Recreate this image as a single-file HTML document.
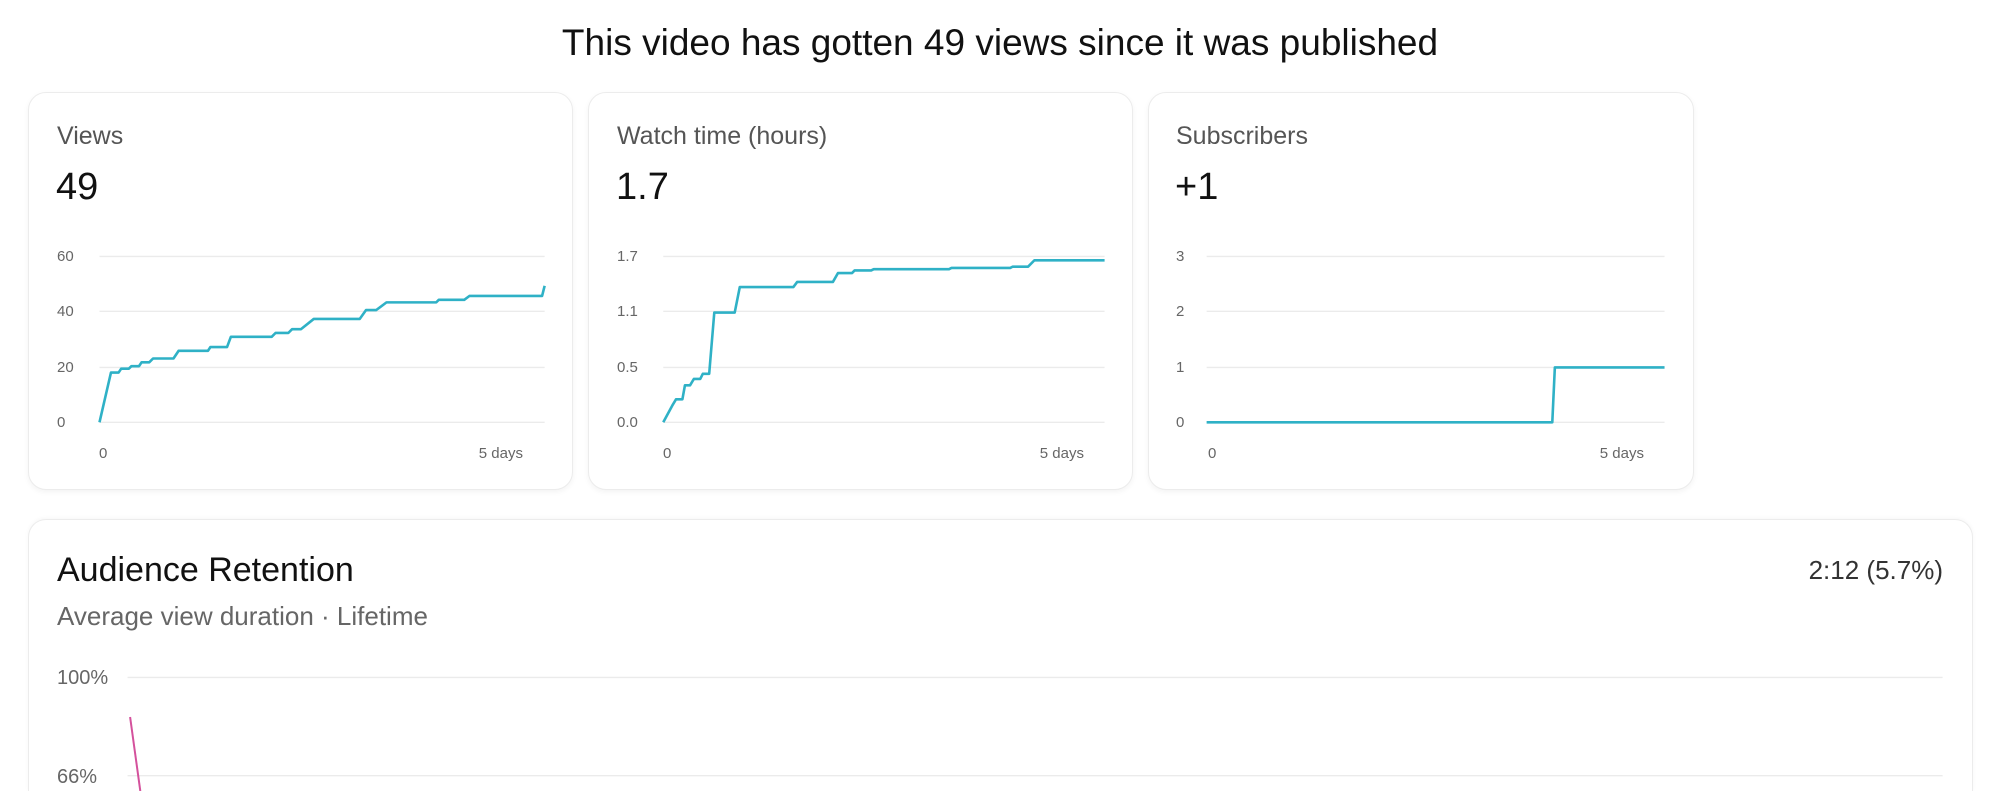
<!DOCTYPE html>
<html style="overflow:hidden;height:791px"><head><meta charset="utf-8"><style>
*{margin:0;padding:0;box-sizing:border-box}
body{width:2000px;height:791px;background:#fff;position:relative;overflow:hidden;font-family:"Liberation Sans",sans-serif;color:#111}
#w{position:absolute;left:0;top:0;width:2000px;height:791px;overflow:hidden}
.t{position:absolute;white-space:nowrap;line-height:1}
.card{position:absolute;background:#fff;border:1px solid #ececec;border-radius:18px;box-shadow:0 2px 6px rgba(0,0,0,0.05)}
.lbl{font-size:25px;color:#555}
.val{font-size:38px;color:#111}
.ax{font-size:15px;color:#666}
svg{position:absolute;left:0;top:0}
</style></head><body><div id="w">
<div class="t" style="left:0;width:2000px;text-align:center;top:24px;font-size:37px;color:#111">This video has gotten 49 views since it was published</div>

<div class="card" style="left:28px;top:92px;width:545px;height:398px"></div>
<div class="card" style="left:588px;top:92px;width:545px;height:398px"></div>
<div class="card" style="left:1148px;top:92px;width:546px;height:398px"></div>
<div class="card" style="left:28px;top:519px;width:1945px;height:272px;border-bottom:none;border-radius:18px 18px 0 0;box-shadow:0 -1px 4px rgba(0,0,0,0.04)"></div>

<div class="t lbl" style="left:57px;top:124px">Views</div>
<div class="t val" style="left:56px;top:168px">49</div>
<div class="t lbl" style="left:617px;top:124px">Watch time (hours)</div>
<div class="t val" style="left:616px;top:168px">1.7</div>
<div class="t lbl" style="left:1176px;top:124px">Subscribers</div>
<div class="t val" style="left:1175px;top:168px">+1</div>

<div class="t ax" style="left:57px;top:249px">60</div>
<div class="t ax" style="left:57px;top:304px">40</div>
<div class="t ax" style="left:57px;top:360px">20</div>
<div class="t ax" style="left:57px;top:415px">0</div>
<div class="t ax" style="left:617px;top:249px">1.7</div>
<div class="t ax" style="left:617px;top:304px">1.1</div>
<div class="t ax" style="left:617px;top:360px">0.5</div>
<div class="t ax" style="left:617px;top:415px">0.0</div>
<div class="t ax" style="left:1176px;top:249px">3</div>
<div class="t ax" style="left:1176px;top:304px">2</div>
<div class="t ax" style="left:1176px;top:360px">1</div>
<div class="t ax" style="left:1176px;top:415px">0</div>

<div class="t ax" style="left:99px;top:446px">0</div>
<div class="t ax" style="left:463px;top:446px;width:60px;text-align:right">5 days</div>
<div class="t ax" style="left:663px;top:446px">0</div>
<div class="t ax" style="left:1024px;top:446px;width:60px;text-align:right">5 days</div>
<div class="t ax" style="left:1208px;top:446px">0</div>
<div class="t ax" style="left:1584px;top:446px;width:60px;text-align:right">5 days</div>

<div class="t" style="left:57px;top:553px;font-size:34px;color:#111">Audience Retention</div>
<div class="t" style="left:1743px;top:557px;width:200px;text-align:right;font-size:26px;color:#333">2:12 (5.7%)</div>
<div class="t" style="left:57px;top:603px;font-size:26px;color:#666">Average view duration · Lifetime</div>
<div class="t" style="left:57px;top:668px;font-size:20px;color:#666">100%</div>
<div class="t" style="left:57px;top:767px;font-size:20px;color:#666">66%</div>

<svg width="2000" height="791" viewBox="0 0 1568 620" preserveAspectRatio="none">
<g stroke="#ebebeb" stroke-width="1.3" fill="none">
<path vector-effect="non-scaling-stroke" d="M78 201H427M78 244H427M78 288H427M78 331H427"/>
<path vector-effect="non-scaling-stroke" d="M520 201H866M520 244H866M520 288H866M520 331H866"/>
<path vector-effect="non-scaling-stroke" d="M946 201H1305M946 244H1305M946 288H1305M946 331H1305"/>
<path vector-effect="non-scaling-stroke" d="M100 531H1523M100 608H1523"/>
</g>
<g stroke="#2fb1c6" stroke-width="2.6" fill="none" stroke-linejoin="round">
<polyline vector-effect="non-scaling-stroke" points="78,331 87,292 93,292 95,289 101,289 103,287 109,287 111,284 117,284 120,281 136,281 140,275 163,275 165,272 178,272 181,264 213,264 216,261 226,261 229,258 236,258 246,250 282,250 287,243 295,243 303,237 342,237 344,235 364,235 368,232 425,232 427,224"/>
<polyline vector-effect="non-scaling-stroke" points="520,331 527,318 530,313 535,313 537,302 541,302 544,297 549,297 551,293 556,293 560,245 576,245 580,225 622,225 625,221 653,221 657,214 668,214 670,212 683,212 685,211 744,211 746,210 792,210 794,209 806,209 811,204 866,204"/>
<polyline vector-effect="non-scaling-stroke" points="946,331 1217,331 1219,288 1305,288"/>
</g>
<path vector-effect="non-scaling-stroke" d="M102 562L110 620" stroke="#d4519c" stroke-width="2" fill="none"/>
</svg>
</div></body></html>
